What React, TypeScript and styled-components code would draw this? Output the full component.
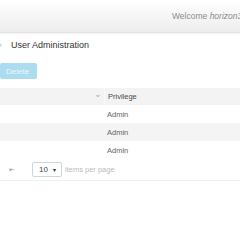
import styled, { createGlobalStyle } from 'styled-components';

const GlobalStyle = createGlobalStyle`
  html, body {
    margin: 0;
    padding: 0;
    background: #ffffff;
    font-family: 'Liberation Sans', Arial, sans-serif;
  }
`;

const rows = ['Admin', 'Admin', 'Admin'];

export default function App() {
  return (
    <>
      <GlobalStyle />
      <Page>
        <Header>
          <Welcome>
            Welcome <User>horizon3</User>
          </Welcome>
        </Header>
        <TitleRow>
          <Crumb>›</Crumb>
          <Title>User Administration</Title>
        </TitleRow>
        <DeleteButton disabled>Delete</DeleteButton>
        <Table>
          <HeadRow>
            <Cell />
            <SortCell>⌄</SortCell>
            <HeadCell>Privilege</HeadCell>
          </HeadRow>
          {rows.map((r, i) => (
            <Row key={i} $striped={i % 2 === 1}>
              <Cell />
              <Cell />
              <Cell>{r}</Cell>
            </Row>
          ))}
        </Table>
        <Pager>
          <FirstPage>⇤</FirstPage>
          <PageSize>
            <span>10</span>
            <Caret>▾</Caret>
          </PageSize>
          <PagerText>items per page</PagerText>
        </Pager>
      </Page>
    </>
  );
}

const Page = styled.div`
  width: 240px;
  height: 240px;
  overflow: hidden;
  display: flex;
  flex-direction: column;
`;

const Header = styled.header`
  height: 32px;
  flex-shrink: 0;
  background: linear-gradient(#ffffff, #ededed);
  border-bottom: 1px solid #e2e2e2;
  box-shadow: 0 1px 2px rgba(0, 0, 0, 0.05);
  display: flex;
  align-items: center;
  padding-left: 172px;
  overflow: hidden;
`;

const Welcome = styled.div`
  font-size: 8.5px;
  color: #8c8c8c;
  white-space: nowrap;
  margin-top: -1px;
`;

const User = styled.span`
  font-style: italic;
`;

const TitleRow = styled.div`
  height: 24px;
  display: flex;
  align-items: center;
  gap: 9px;
`;

const Crumb = styled.span`
  font-size: 9px;
  color: #b5b5b5;
  margin-left: -1px;
`;

const Title = styled.h1`
  margin: 0;
  font-size: 9px;
  font-weight: normal;
  color: #333333;
`;

const DeleteButton = styled.button`
  margin-top: 6px;
  width: 37px;
  height: 16px;
  padding: 0;
  border: none;
  border-radius: 2px;
  background: #acdcef;
  color: #eaf7fc;
  font-family: 'Liberation Sans', Arial, sans-serif;
  font-size: 8px;
  text-align: left;
  padding-left: 6px;
`;

const Table = styled.div`
  margin-top: 9px;
  display: flex;
  flex-direction: column;
`;

const HeadRow = styled.div`
  height: 17px;
  display: grid;
  grid-template-columns: 92px 12px 1fr;
  align-items: center;
  background: #f3f3f3;
`;

const Row = styled.div<{ $striped: boolean }>`
  height: 18px;
  display: grid;
  grid-template-columns: 92px 12px 1fr;
  align-items: center;
  background: ${p => (p.$striped ? '#f4f4f4' : '#ffffff')};
  font-size: 7.5px;
  color: #666;
`;

const Cell = styled.div`
  padding-left: 3px;
`;

const SortCell = styled.div`
  font-size: 9px;
  color: #aaaaaa;
  margin-top: -5px;
  padding-left: 2px;
`;

const HeadCell = styled.div`
  height: 100%;
  display: flex;
  align-items: center;
  padding-left: 3px;
  border-left: 1px solid #fafafa;
  font-size: 7.5px;
  color: #4a4a4a;
`;

const Pager = styled.div`
  height: 21px;
  display: flex;
  align-items: center;
  border-bottom: 1px solid #f0f0f0;
  padding-left: 9px;
`;

const FirstPage = styled.span`
  font-size: 7px;
  color: #999;
  width: 23px;
`;

const PageSize = styled.div`
  width: 30px;
  height: 15px;
  box-sizing: border-box;
  border: 1px solid #cbd6dd;
  border-radius: 2px;
  display: flex;
  align-items: center;
  justify-content: space-between;
  padding: 0 5px 0 6px;
  font-size: 8px;
  color: #444;
`;

const Caret = styled.span`
  font-size: 6px;
  color: #333;
`;

const PagerText = styled.span`
  margin-left: 3px;
  font-size: 7.5px;
  color: #bcbcbc;
`;
